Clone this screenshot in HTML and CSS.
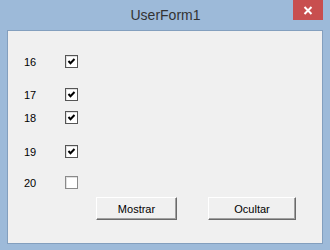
FILE: index.html
```html
<!DOCTYPE html>
<html>
<head>
  <title>UserForm1</title>
  <link rel="stylesheet" href="styles.css">
</head>
<body>
  <div class="window">
    <div class="titlebar">
      <span></span>
      <div class="title">UserForm1</div>
      <div class="close">
        <svg width="10" height="9" viewBox="0 0 10 9">
          <path d="M1.5 1 L8.5 8 M8.5 1 L1.5 8" stroke="#fff" stroke-width="2"/>
        </svg>
      </div>
    </div>

    <div class="client">
      <!-- check rows -->
      <div class="row row-1">
        <span class="num">16</span>
        <span class="check on"><svg width="11" height="11" viewBox="0 0 11 11"><path d="M2.5 5 L4.5 7.3 L8.5 3" fill="none" stroke="#000" stroke-width="2"/></svg></span>
      </div>
      <div class="row row-2">
        <span class="num">17</span>
        <span class="check on"><svg width="11" height="11" viewBox="0 0 11 11"><path d="M2.5 5 L4.5 7.3 L8.5 3" fill="none" stroke="#000" stroke-width="2"/></svg></span>
      </div>
      <div class="row row-3">
        <span class="num">18</span>
        <span class="check on"><svg width="11" height="11" viewBox="0 0 11 11"><path d="M2.5 5 L4.5 7.3 L8.5 3" fill="none" stroke="#000" stroke-width="2"/></svg></span>
      </div>
      <div class="row row-4">
        <span class="num">19</span>
        <span class="check on"><svg width="11" height="11" viewBox="0 0 11 11"><path d="M2.5 5 L4.5 7.3 L8.5 3" fill="none" stroke="#000" stroke-width="2"/></svg></span>
      </div>
      <div class="row row-5">
        <span class="num">20</span>
        <span class="check"></span>
      </div>

      <div class="buttons">
        <button class="btn btn-show">Mostrar</button>
        <button class="btn btn-hide">Ocultar</button>
      </div>
    </div>
  </div>
</body>
</html>
```

FILE: styles.css
```css
body {
  margin: 0;
  font-family: "Liberation Sans", Arial, sans-serif;
  background: #9dbad9;
}
.window {
  width: 330px;
  height: 250px;
  background: #9dbad9;
  padding: 0 7px;
  box-sizing: border-box;
}
.titlebar {
  display: grid;
  grid-template-columns: 31px 1fr 30px;
  height: 30px;
}
.title {
  text-align: center;
  font-size: 14px;
  color: #333;
  line-height: 30px;
}
.close {
  height: 20px;
  background: #c84f4f;
  display: flex;
  align-items: center;
  justify-content: center;
}
.client {
  height: 214px;
  background: #f0f0f0;
  border: 1px solid #839fbe;
  box-sizing: border-box;
  padding-top: 24px;
  font-size: 11px;
  color: #000;
}
.row {
  display: flex;
  align-items: center;
  height: 13px;
  padding-left: 16px;
}
.row-2 { margin-top: 20px; }
.row-3 { margin-top: 10px; }
.row-4 { margin-top: 21px; }
.row-5 { margin-top: 18px; }
.num {
  width: 41px;
}
.check {
  width: 13px;
  height: 13px;
  box-sizing: border-box;
  border: 1px solid #8a8a8a;
  background: #fff;
  box-shadow: inset 1px 1px #e0e0e0;
  display: flex;
  align-items: center;
  justify-content: center;
}
.check.on {
  border-color: #555;
}
.buttons {
  display: flex;
  gap: 31px;
  padding-left: 88px;
  margin-top: 8px;
}
.btn {
  height: 23px;
  padding: 0;
  font-family: "Liberation Sans", Arial, sans-serif;
  font-size: 11px;
  color: #000;
  background: #f0f0f0;
  border: 1px solid;
  border-color: #fff #6a6a6a #6a6a6a #fff;
  box-shadow: inset -1px -1px #a0a0a0;
}
.btn-show { width: 81px; }
.btn-hide { width: 88px; }
```
